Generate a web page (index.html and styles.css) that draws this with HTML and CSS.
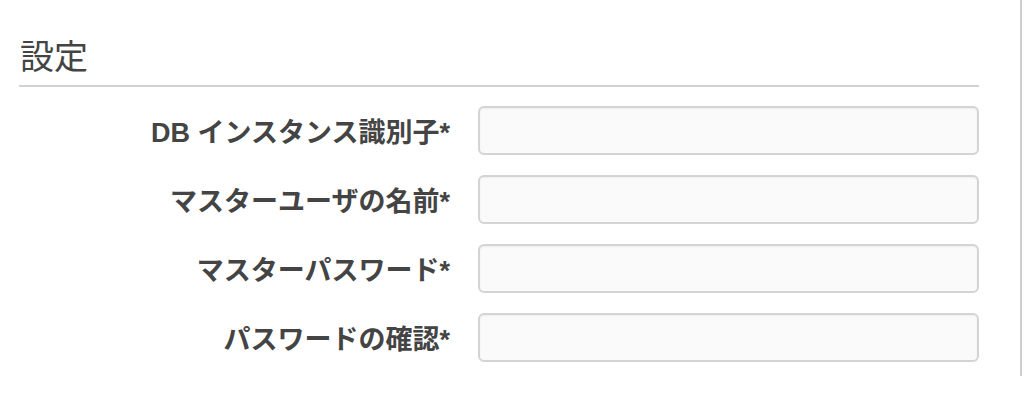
FILE: index.html
```html
<!DOCTYPE html>
<html lang="ja">
<head>
<meta charset="utf-8">
<link rel="stylesheet" href="styles.css">
</head>
<body>
<div class="panel">
  <h2 class="title">設定</h2>
  <form class="form">
    <label class="label" for="f1">DB インスタンス識別子*</label>
    <input class="field" id="f1" type="text">
    <label class="label" for="f2">マスターユーザの名前*</label>
    <input class="field" id="f2" type="text">
    <label class="label" for="f3">マスターパスワード*</label>
    <input class="field" id="f3" type="password">
    <label class="label" for="f4">パスワードの確認*</label>
    <input class="field" id="f4" type="password">
  </form>
</div>
</body>
</html>
```
FILE: styles.css
```css
html, body {
  margin: 0;
  padding: 0;
  background: #fff;
}
body {
  font-family: "Noto Sans CJK JP", "Liberation Sans", sans-serif;
  color: #444;
}
.panel {
  width: 1020px;
  height: 376px;
  border-right: 2px solid #cfcfcf;
  box-sizing: content-box;
}
.title {
  margin: 0 0 0 19px;
  width: 960px;
  padding: 30px 0 4px 1px;
  font-size: 34px;
  font-weight: 400;
  line-height: 50px;
  color: #444;
  border-bottom: 2px solid #d2d2d2;
  box-sizing: border-box;
  height: 87px;
}
.form {
  margin: 19px 0 0 19px;
  display: grid;
  grid-template-columns: 431px 501px;
  column-gap: 28px;
  row-gap: 20px;
  align-items: center;
}
.label {
  text-align: right;
  font-size: 27px;
  font-weight: 700;
  color: #444;
  white-space: nowrap;
  font-family: "Liberation Sans", "Noto Sans CJK JP", sans-serif;
}
.field {
  height: 49px;
  box-sizing: border-box;
  border: 2px solid #d4d4d4;
  border-radius: 6px;
  background: #fafafa;
  box-shadow: inset 0 1px 2px rgba(0,0,0,0.05);
  margin: 0;
  padding: 0 10px;
  font-size: 20px;
}
```
